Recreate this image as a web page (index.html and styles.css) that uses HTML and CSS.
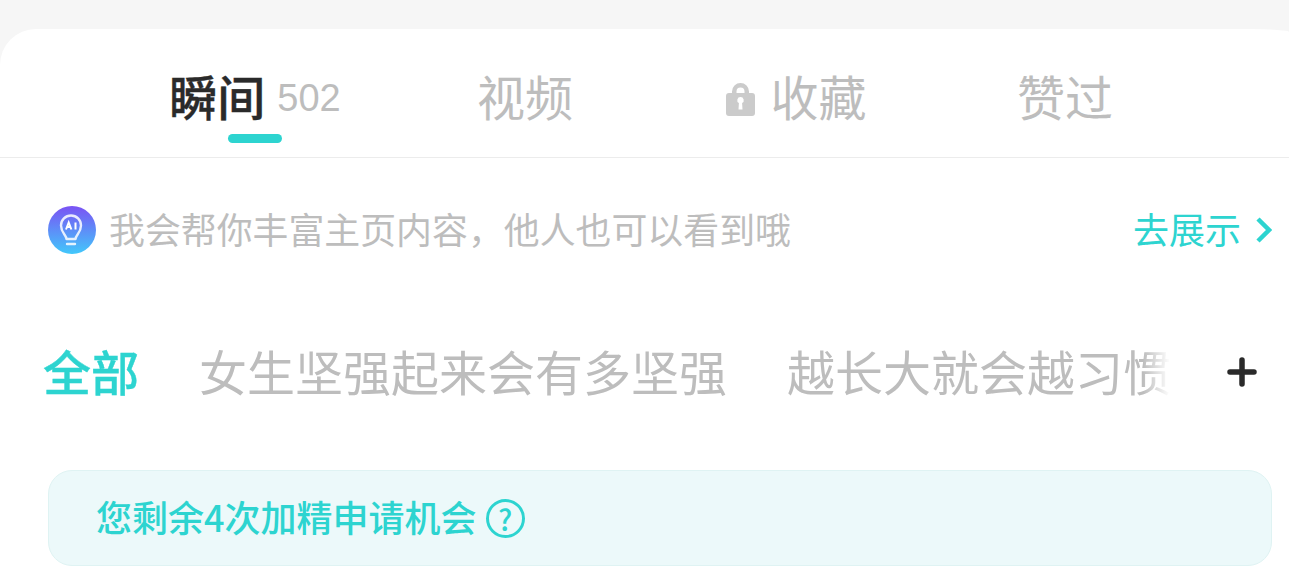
FILE: index.html
```html
<!DOCTYPE html>
<html lang="zh-CN">
<head>
  <meta charset="UTF-8" />
  <title>瞬间</title>
  <link rel="stylesheet" href="styles.css">
</head>
<body>
  <div class="panel">
    <!-- tabs -->
    <div class="tabs">
      <div class="tab tab-active">
        <span class="tab-name">瞬间<i class="tab-line"></i></span>
        <span class="tab-count">502</span>
      </div>
      <div class="tab">视频</div>
      <div class="tab">
        <svg class="lock" viewBox="0 0 29 33" width="29" height="33">
          <path fill="#cbcbcb" fill-rule="evenodd" d="M6 10V8.500a8.500 8.500 0 0 1 17 0V10h3a3 3 0 0 1 3 3v17a3 3 0 0 1-3 3H3a3 3 0 0 1-3-3V13a3 3 0 0 1 3-3zM10.500 10h8V8.500a4 4 0 0 0-8 0zM14.500 14a3.200 3.200 0 0 0-1.600 6l-.4 6.500h4l-.4-6.500a3.200 3.200 0 0 0-1.600-6z"/>
        </svg>
        收藏
      </div>
      <div class="tab">赞过</div>
    </div>

    <!-- tip -->
    <div class="tip">
      <svg class="tip-icon" viewBox="0 0 48 48" width="48" height="48">
        <defs>
          <linearGradient id="tipGrad" x1="0" y1="0" x2="0" y2="1">
            <stop offset="0" stop-color="#7a52f4"/>
            <stop offset="1" stop-color="#42c8fb"/>
          </linearGradient>
        </defs>
        <circle cx="24" cy="24" r="24" fill="url(#tipGrad)"/>
        <path fill="none" stroke="#fff" stroke-opacity=".85" stroke-width="2.400" stroke-linecap="round" stroke-linejoin="round" d="M18.500 33c0-4-5.500-6-5.500-13.500a10 10 0 0 1 20 0c0 7.500-5.500 9.500-5.500 13.500zM19 38h8"/>
        <path fill="none" stroke="#fff" stroke-width="2" d="M18 23.500l2.700-7 2.700 7M19 21h3.400M27.500 16.500v7"/>
      </svg>
      <span class="tip-text">我会帮你丰富主页内容，他人也可以看到哦</span>
      <span class="tip-link">去展示</span>
      <svg class="tip-arrow" viewBox="0 0 16 26" width="16" height="26">
        <path fill="none" stroke="#2dd4d0" stroke-width="4.500" d="M2 2l11 11L2 24"/>
      </svg>
    </div>

    <!-- filters -->
    <div class="filters">
      <div class="filter-list">
        <span class="filter filter-active">全部</span>
        <span class="filter">女生坚强起来会有多坚强</span>
        <span class="filter">越长大就会越习惯</span>
      </div>
      <svg class="add" viewBox="0 0 30 30" width="30" height="30">
        <path stroke="#2a2a2a" stroke-width="5.500" stroke-linecap="round" d="M15 3v24M3 15h24"/>
      </svg>
    </div>

    <!-- banner -->
    <div class="banner">
      <span class="banner-text">您剩余4次加精申请机会</span>
      <span class="help">?</span>
    </div>
  </div>
</body>
</html>
```

FILE: styles.css
```css
body {
  margin: 0;
  height: 586px;
  overflow: hidden;
  background: #f6f6f6;
  font-family: "Noto Sans CJK SC", sans-serif;
}

.panel {
  margin-top: 29px;
  height: 557px;
  background: #fff;
  border-radius: 36px 40px 0 0 / 36px 3px 0 0;
}

.tabs {
  display: grid;
  grid-template-columns: repeat(4, 270px);
  height: 128px;
  padding-left: 120px;
  border-bottom: 1px solid #ececec;
}

.tab {
  display: flex;
  align-items: center;
  justify-content: center;
  gap: 15px;
  height: 132px;
  font-size: 48px;
  line-height: 1;
  color: #bdbdbd;
}

.tab-active {
  gap: 12px;
}

.tab-name {
  position: relative;
  color: #2a2a2a;
  font-weight: 500;
  -webkit-text-stroke: 0.4px #2a2a2a;
}

.tab-line {
  position: absolute;
  left: 59px;
  top: 63px;
  width: 54px;
  height: 9px;
  border-radius: 5px;
  background: #2dd4d0;
}

.tab-count {
  margin-top: 5px;
  font-family: "Liberation Sans", sans-serif;
  font-size: 38px;
}

.lock {
  margin: 9px 0 0 3px;
}

.tip {
  display: flex;
  align-items: center;
  height: 48px;
  margin-top: 48px;
  padding: 0 17px 0 48px;
}

.tip-text {
  flex: 1;
  margin: 0 0 4px 13px;
  font-size: 35.900px;
  color: #bdbdbd;
}

.tip-link {
  margin-bottom: 4px;
  font-size: 36px;
  color: #2dd4d0;
}

.tip-arrow {
  margin-left: 15px;
}

.filters {
  display: flex;
  align-items: center;
  height: 72px;
  margin-top: 80px;
  padding-left: 43px;
}

.filter-list {
  display: flex;
  gap: 60px;
  width: 1127px;
  overflow: hidden;
  white-space: nowrap;
  -webkit-mask-image: linear-gradient(to right, #000 1100px, transparent);
  mask-image: linear-gradient(to right, #000 1100px, transparent);
}

.filter {
  font-size: 48px;
  line-height: 72px;
  color: #bdbdbd;
}

.filter-active {
  font-weight: 500;
  color: #2dd4d0;
  -webkit-text-stroke: 0.4px #2dd4d0;
}

.add {
  margin: 3px 0 0 57px;
}

.banner {
  display: flex;
  align-items: center;
  gap: 9px;
  height: 94px;
  margin: 64px 17px 0 48px;
  padding-left: 47px;
  border: 1px solid #dff3f3;
  border-radius: 24px;
  background: #ecf9fa;
  font-size: 36px;
  font-weight: 500;
  color: #2dd4d0;
}

.banner-text {
  margin-bottom: 4px;
}

.help {
  display: flex;
  align-items: center;
  justify-content: center;
  box-sizing: border-box;
  width: 39px;
  height: 39px;
  border: 3px solid #2dd4d0;
  border-radius: 50%;
  font-size: 29px;
  font-weight: 500;
  line-height: 1;
}
```
